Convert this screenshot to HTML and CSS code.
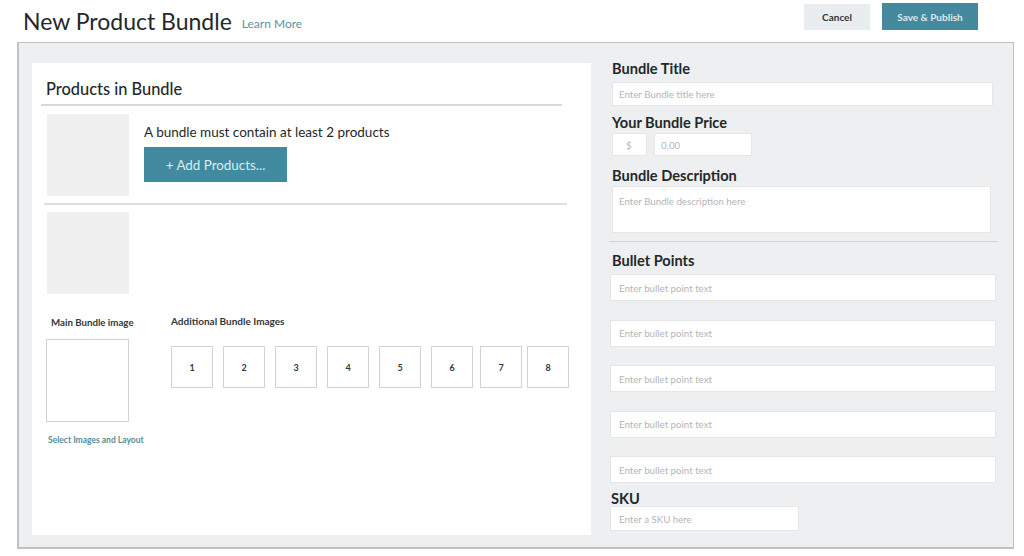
FILE: index.html
```html
<!DOCTYPE html>
<html lang="en">
<head>
<meta charset="utf-8">
<title>New Product Bundle</title>
<link rel="stylesheet" href="styles.css">
</head>
<body>
<header class="top">
  <h1 class="page-title">New Product Bundle</h1>
  <a class="learn">Learn More</a>
  <div class="actions">
    <button class="btn-cancel">Cancel</button>
    <button class="btn-save">Save &amp; Publish</button>
  </div>
</header>
<main class="panel">
  <section class="card">
    <h2 class="card-title">Products in Bundle</h2>
    <div class="slot slot-first">
      <div class="thumb"></div>
      <div class="slot-body">
        <p class="must">A bundle must contain at least 2 products</p>
        <button class="btn-add">+ Add Products...</button>
      </div>
    </div>
    <div class="slot slot-second">
      <div class="thumb"></div>
    </div>
    <div class="images">
      <div class="main-image">
        <div class="cap cap-main">Main Bundle image</div>
        <div class="main-box"></div>
        <a class="select">Select Images and Layout</a>
      </div>
      <div class="more">
        <div class="cap cap-more">Additional Bundle Images</div>
        <div class="more-grid">
          <div class="num">1</div>
          <div class="num">2</div>
          <div class="num">3</div>
          <div class="num">4</div>
          <div class="num">5</div>
          <div class="num">6</div>
          <div class="num">7</div>
          <div class="num">8</div>
        </div>
      </div>
    </div>
  </section>
  <section class="form">
    <label class="lab lab-title">Bundle Title</label>
    <input class="field f-title" placeholder="Enter Bundle title here">
    <label class="lab lab-price">Your Bundle Price</label>
    <div class="price-row">
      <input class="field f-cur" placeholder="$">
      <input class="field f-price" placeholder="0.00">
    </div>
    <label class="lab lab-desc">Bundle Description</label>
    <textarea class="field f-desc" placeholder="Enter Bundle description here"></textarea>
    <hr class="form-rule">
    <label class="lab lab-bullets">Bullet Points</label>
    <div class="bullets">
      <input class="field f-bullet" placeholder="Enter bullet point text">
      <input class="field f-bullet" placeholder="Enter bullet point text">
      <input class="field f-bullet" placeholder="Enter bullet point text">
      <input class="field f-bullet" placeholder="Enter bullet point text">
      <input class="field f-bullet" placeholder="Enter bullet point text">
    </div>
    <label class="lab lab-sku">SKU</label>
    <input class="field f-sku" placeholder="Enter a SKU here">
  </section>
</main>
</body>
</html>
```
FILE: styles.css
```css
* { box-sizing: border-box; }
html, body { margin: 0; padding: 0; }
body {
  width: 1024px;
  height: 556px;
  overflow: hidden;
  background: #fff;
  color: #1f2426;
  font-family: "Lato", "Liberation Sans", sans-serif;
}
.top {
  height: 42px;
  display: flex;
  align-items: flex-start;
  padding-left: 23px;
}
.page-title {
  margin: 6px 0 0;
  font-size: 23px;
  line-height: 30px;
  font-weight: 400;
  color: #23282a;
}
.learn {
  margin: 17px 0 0 10px;
  font-size: 12px;
  line-height: 14px;
  color: #5d939f;
}
.actions {
  margin-left: auto;
  margin-right: 46px;
  margin-top: 3px;
  display: flex;
  gap: 12px;
}
button {
  border: 0;
  padding: 0;
  font-family: inherit;
}
.btn-cancel {
  width: 66px;
  height: 26px;
  margin-top: 1px;
  background: #e8eef0;
  color: #30393c;
  font-size: 10px;
  font-weight: 700;
}
.btn-save {
  width: 96px;
  height: 27px;
  background: #45899e;
  color: #d8e9ee;
  font-size: 10px;
  font-weight: 700;
}
.panel {
  width: 997px;
  height: 507px;
  margin-left: 17px;
  border: 1px solid #bfc2c3;
  border-left-width: 2px;
  border-bottom-width: 2px;
  background: #edeff0;
  display: flex;
  align-items: flex-start;
}
.card {
  width: 559px;
  height: 472px;
  margin: 20px 0 0 13px;
  padding-top: 16px;
  background: #fff;
}
.card-title {
  margin: 0 29px 0 9px;
  padding: 0 0 6px 5px;
  font-size: 16.4px;
  line-height: 19px;
  font-weight: 500;
  border-bottom: 2px solid #d6d8d9;
  height: 27px;
  color: #23282a;
}
.slot {
  display: flex;
  padding-left: 15px;
}
.slot-first {
  margin: 8px 24px 0 12px;
  padding: 0 0 8px 3px;
  height: 91px;
  border-bottom: 2px solid #dcdedf;
}
.slot-second { margin-top: 7px; }
.thumb {
  width: 82px;
  height: 82px;
  background: #f0f0f0;
}
.slot-body { margin-left: 15px; }
.must {
  margin: 10px 0 0;
  font-size: 13.5px;
  line-height: 16px;
  color: #23282a;
}
.btn-add {
  display: block;
  width: 143px;
  height: 35px;
  margin-top: 7px;
  background: #418a9f;
  color: #dcebef;
  font-size: 13.4px;
}
.images {
  display: flex;
  margin-top: 22px;
  padding-left: 14px;
}
.main-image { width: 125px; }
.cap {
  font-size: 9.7px;
  line-height: 12px;
  font-weight: 700;
  color: #33383a;
  white-space: nowrap;
}
.cap-main { padding: 0 0 0 5px; }
.cap-more { font-size: 10px; margin-top: -1px; }
.main-box {
  width: 83px;
  height: 83px;
  margin-top: 11px;
  background: #fff;
  border: 1px solid #d0d2d3;
}
.select {
  display: block;
  margin: 12px 0 0 2px;
  font-size: 8.5px;
  line-height: 12px;
  white-space: nowrap;
  color: #578d98;
  font-weight: 700;
}
.more-grid {
  display: grid;
  grid-template-columns: 52px 52px 52px 52px 52px 49px 47px 42px;
  margin: 19px 0 0 0;
}
.num {
  width: 42px;
  height: 42px;
  border: 1px solid #d0d2d3;
  display: flex;
  align-items: center;
  justify-content: center;
  font-size: 9px;
  font-weight: 700;
  color: #33383a;
}
.form {
  flex: 1;
  display: flex;
  flex-direction: column;
  align-items: flex-start;
  padding: 17px 0 0 21px;
}
.lab {
  display: block;
  font-size: 14.6px;
  line-height: 17px;
  font-weight: 700;
  color: #23282a;
}
.field {
  display: block;
  margin: 0;
  padding: 0 0 0 6px;
  background: #fff;
  border: 1px solid #e4e6e7;
  border-radius: 0;
  outline: 0;
  font-family: inherit;
  font-size: 9.7px;
  color: #333;
}
.field::placeholder { color: #b3b6b8; opacity: 1; }
.f-title { width: 381px; height: 24px; margin-top: 5px; }
.lab-price { margin-top: 8px; }
.price-row { display: flex; gap: 7px; margin-top: 2px; }
.f-cur { width: 35px; height: 23px; padding-left: 13px; }
.f-price { width: 98px; height: 23px; }
.lab-desc { margin-top: 11px; }
.f-desc {
  width: 379px;
  height: 47px;
  margin-top: 2px;
  padding-top: 8px;
  resize: none;
  line-height: 12px;
}
.form-rule {
  width: 389px;
  height: 0;
  margin: 8px 0 0 -3px;
  border: 0;
  border-top: 1px solid #cfd2d3;
}
.lab-bullets { margin-top: 10px; }
.bullets {
  display: flex;
  flex-direction: column;
  gap: 18.5px;
  margin: 5px 0 0 -2px;
}
.f-bullet { width: 386px; height: 27px; padding-left: 8px; }
.lab-sku { margin: 7px 0 0 -1px; }
.f-sku { width: 189px; height: 25px; margin: -1px 0 0 -2px; padding-left: 8px; }
```
